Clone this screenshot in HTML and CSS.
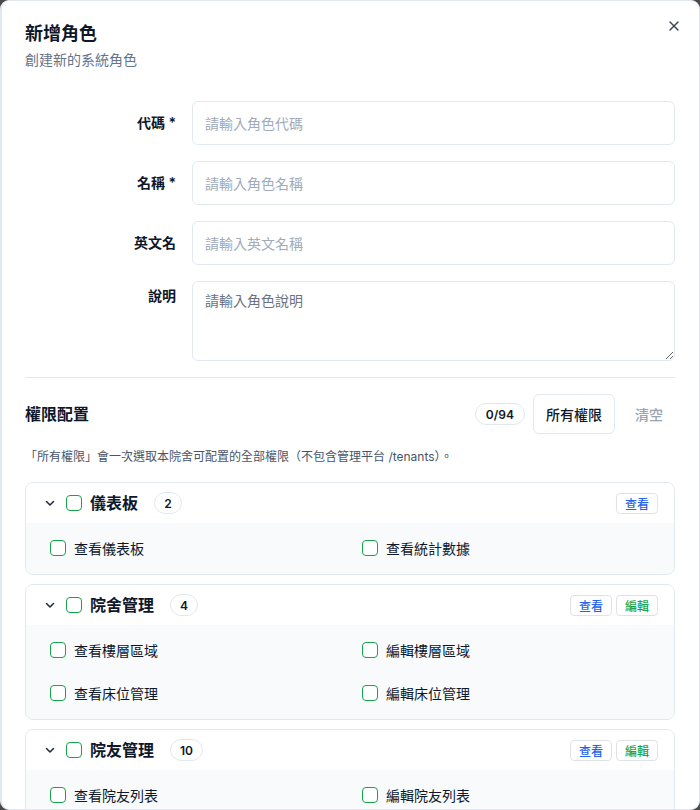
FILE: index.html
```html
<!DOCTYPE html>
<html lang="zh-Hant">
<head>
<meta charset="utf-8">
<title>新增角色</title>
<link rel="stylesheet" href="styles.css">
</head>
<body>
<div class="dialog">
  <button class="close" aria-label="關閉">
    <svg width="14" height="14" viewBox="0 0 14 14"><path d="M3 3 L11 11 M11 3 L3 11" stroke="#3f4654" stroke-width="1.5" stroke-linecap="round" fill="none"/></svg>
  </button>
  <header class="head">
    <h1 class="title">新增角色</h1>
    <p class="subtitle">創建新的系統角色</p>
  </header>

  <form class="form">
    <div class="row">
      <label class="label">代碼 *</label>
      <input class="input" placeholder="請輸入角色代碼">
    </div>
    <div class="row">
      <label class="label">名稱 *</label>
      <input class="input" placeholder="請輸入角色名稱">
    </div>
    <div class="row">
      <label class="label">英文名</label>
      <input class="input" placeholder="請輸入英文名稱">
    </div>
    <div class="row row-top">
      <label class="label">說明</label>
      <textarea class="textarea" placeholder="請輸入角色說明"></textarea>
    </div>
  </form>

  <hr class="sep">

  <div class="perm-head">
    <h2 class="perm-title">權限配置</h2>
    <div class="perm-actions">
      <span class="pill">0/94</span>
      <button class="btn-outline">所有權限</button>
      <button class="btn-ghost">清空</button>
    </div>
  </div>
  <p class="note">「所有權限」會一次選取本院舍可配置的全部權限（不包含管理平台 /tenants）。</p>

  <div class="groups">
    <section class="group">
      <div class="group-head">
        <svg class="chev" width="16" height="16" viewBox="0 0 16 16"><path d="M4.5 6.5 L8 10 L11.5 6.5" stroke="#1f2937" stroke-width="1.5" fill="none" stroke-linecap="round" stroke-linejoin="round"/></svg>
        <span class="cb"></span>
        <span class="group-name">儀表板</span>
        <span class="pill count">2</span>
        <div class="tags">
          <span class="tag view">查看</span>
        </div>
      </div>
      <div class="group-body">
        <label class="item"><span class="cb"></span>查看儀表板</label>
        <label class="item"><span class="cb"></span>查看統計數據</label>
      </div>
    </section>

    <section class="group">
      <div class="group-head">
        <svg class="chev" width="16" height="16" viewBox="0 0 16 16"><path d="M4.5 6.5 L8 10 L11.5 6.5" stroke="#1f2937" stroke-width="1.5" fill="none" stroke-linecap="round" stroke-linejoin="round"/></svg>
        <span class="cb"></span>
        <span class="group-name">院舍管理</span>
        <span class="pill count">4</span>
        <div class="tags">
          <span class="tag view">查看</span>
          <span class="tag edit">編輯</span>
        </div>
      </div>
      <div class="group-body">
        <label class="item"><span class="cb"></span>查看樓層區域</label>
        <label class="item"><span class="cb"></span>編輯樓層區域</label>
        <label class="item"><span class="cb"></span>查看床位管理</label>
        <label class="item"><span class="cb"></span>編輯床位管理</label>
      </div>
    </section>

    <section class="group">
      <div class="group-head">
        <svg class="chev" width="16" height="16" viewBox="0 0 16 16"><path d="M4.5 6.5 L8 10 L11.5 6.5" stroke="#1f2937" stroke-width="1.5" fill="none" stroke-linecap="round" stroke-linejoin="round"/></svg>
        <span class="cb"></span>
        <span class="group-name">院友管理</span>
        <span class="pill count">10</span>
        <div class="tags">
          <span class="tag view">查看</span>
          <span class="tag edit">編輯</span>
        </div>
      </div>
      <div class="group-body">
        <label class="item"><span class="cb"></span>查看院友列表</label>
        <label class="item"><span class="cb"></span>編輯院友列表</label>
      </div>
    </section>
  </div>
</div>
</body>
</html>
```

FILE: styles.css
```css
* { box-sizing: border-box; }

html, body {
  margin: 0;
  height: 100%;
  background: #4a4a4a;
}

body {
  font-family: Inter, "Noto Sans CJK TC", "Noto Sans", sans-serif;
  color: #0f172a;
}

.dialog {
  position: relative;
  width: 700px;
  height: 810px;
  overflow: hidden;
  background: #ffffff;
  border: 1px solid #e2e8f0;
  border-left-width: 2px;
  border-radius: 9px;
  padding: 23px 24px 24px 23px;
}

.close {
  position: absolute;
  top: 17px;
  right: 17px;
  width: 16px;
  height: 16px;
  padding: 0;
  border: 0;
  background: none;
  display: flex;
  align-items: center;
  justify-content: center;
}

.head { margin: 0; }

.title {
  margin: 0;
  font-size: 18px;
  line-height: 20px;
  font-weight: 700;
  color: #0f172a;
}

.subtitle {
  margin: 6px 0 0;
  font-size: 14px;
  line-height: 20px;
  color: #64748b;
}

.form {
  margin-top: 31px;
  display: flex;
  flex-direction: column;
  gap: 16px;
}

.row {
  display: grid;
  grid-template-columns: 151px 1fr;
  column-gap: 16px;
  align-items: center;
}

.row-top { align-items: start; }
.row-top .label { padding-top: 5px; }

.label {
  text-align: right;
  font-size: 14px;
  line-height: 20px;
  font-weight: 600;
  color: #0f172a;
}

.input, .textarea {
  font-family: inherit;
  width: 100%;
  border: 1px solid #e2e8f0;
  border-radius: 6px;
  background: #fff;
  font-size: 14px;
  color: #0f172a;
  outline: none;
}

.input {
  height: 44px;
  padding: 0 12px;
}

.input::placeholder { color: #a0aab8; }

.textarea {
  height: 80px;
  padding: 9px 12px;
  line-height: 20px;
  resize: vertical;
  display: block;
}

.textarea::placeholder { color: #6b7280; }

.sep {
  margin: 16px 0 0;
  border: 0;
  border-top: 1px solid #e2e8f0;
}

.perm-head {
  margin-top: 16px;
  height: 40px;
  display: flex;
  align-items: center;
  justify-content: space-between;
}

.perm-title {
  margin: 0;
  font-size: 16px;
  line-height: 20px;
  font-weight: 600;
  color: #0f172a;
}

.perm-actions {
  display: flex;
  align-items: center;
  gap: 8px;
}

.pill {
  display: inline-flex;
  align-items: center;
  justify-content: center;
  height: 22px;
  padding: 0 10px;
  border: 1px solid #e2e8f0;
  border-radius: 999px;
  font-size: 12px;
  font-weight: 600;
  color: #0f172a;
  background: #fff;
}

.btn-outline {
  font-family: inherit;
  height: 40px;
  padding: 0 12px;
  border: 1px solid #e2e8f0;
  border-radius: 6px;
  background: #fff;
  font-size: 14px;
  font-weight: 500;
  color: #0f172a;
}

.btn-ghost {
  font-family: inherit;
  height: 40px;
  padding: 0 12px;
  border: 0;
  background: none;
  font-size: 14px;
  font-weight: 500;
  color: #9aa3af;
}

.note {
  margin: 15px 0 0;
  font-size: 12px;
  line-height: 16px;
  color: #475569;
}

.groups {
  margin-top: 17px;
  display: flex;
  flex-direction: column;
  gap: 9px;
}

.group {
  border: 1px solid #e2e8f0;
  border-radius: 8px;
  overflow: hidden;
  flex-shrink: 0;
}

.group-head {
  height: 40px;
  display: flex;
  align-items: center;
  padding: 0 16px;
  background: #fff;
}

.chev { flex-shrink: 0; margin-right: 8px; }

.cb {
  display: inline-block;
  width: 16px;
  height: 16px;
  border: 1px solid #16a34a;
  border-radius: 4px;
  background: #fff;
  flex-shrink: 0;
}

.group-name {
  margin-left: 8px;
  font-size: 16px;
  line-height: 20px;
  font-weight: 600;
  color: #0f172a;
}

.count {
  margin-left: 16px;
  min-width: 28px;
  padding: 0 9px;
}

.tags {
  margin-left: auto;
  display: flex;
  gap: 4px;
}

.tag {
  display: inline-flex;
  align-items: center;
  height: 21px;
  padding: 0 8px;
  border: 1px solid #dfe3e8;
  border-radius: 4px;
  font-size: 12px;
  font-weight: 500;
  background: #fff;
}

.tag.view { color: #2563eb; }
.tag.edit { color: #16a34a; }

.group-body {
  background: #f8fafc;
  padding: 11px 24px 12px;
  display: grid;
  grid-template-columns: 1fr 1fr;
  column-gap: 24px;
  row-gap: 15px;
}

.item {
  height: 28px;
  display: flex;
  align-items: center;
  gap: 8px;
  font-size: 14px;
  color: #0f172a;
}
```
